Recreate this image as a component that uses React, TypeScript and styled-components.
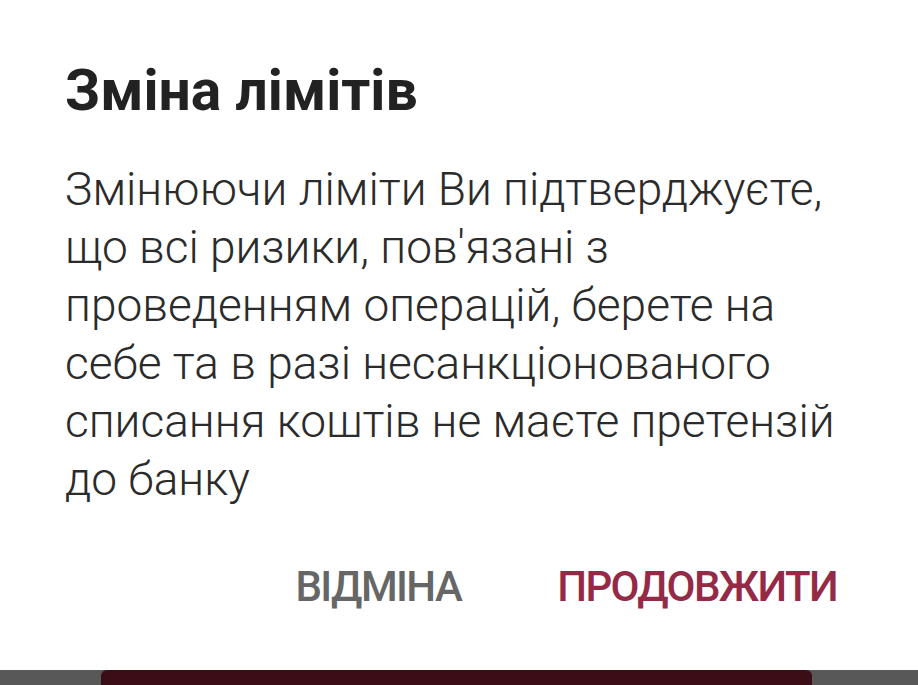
import styled, { createGlobalStyle } from 'styled-components'

const GlobalStyle = createGlobalStyle`
    html, body {
        margin: 0;
        padding: 0;
        background: #585858;
    }
    #root {
        width: 918px;
        height: 685px;
        overflow: hidden;
    }
`

const Page = styled.div`
    display: flex;
    flex-direction: column;
    width: 918px;
    height: 685px;
    background: #585858;
`

const Dialog = styled.div`
    background: #ffffff;
    height: 670px;
    box-sizing: border-box;
    padding: 60px 81px 0 65px;
    display: flex;
    flex-direction: column;
`

const Title = styled.h1`
    margin: 0;
    font-family: Roboto, 'Noto Sans', sans-serif;
    font-weight: 700;
    font-size: 57px;
    line-height: 62px;
    color: #222222;
`

const Message = styled.p`
    margin: 38px 0 0;
    max-width: 790px;
    font-family: Roboto, 'Noto Sans', sans-serif;
    font-weight: 300;
    font-size: 46px;
    line-height: 58px;
    color: #2b2b2b;
`

const Actions = styled.div`
    display: flex;
    justify-content: flex-end;
    align-items: center;
    gap: 96px;
    margin-top: 55px;
`

const ActionButton = styled.button<{ $primary?: boolean }>`
    border: none;
    background: none;
    padding: 0;
    font-family: Roboto, 'Noto Sans', sans-serif;
    font-weight: 500;
    font-size: 42px;
    line-height: 48px;
    letter-spacing: -1.6px;
    color: ${({ $primary }) => ($primary ? '#952a47' : '#666666')};
    cursor: pointer;
`

const Behind = styled.div`
    flex: 1;
    overflow: hidden;
    display: flex;
`

const BehindButton = styled.div`
    margin-left: 101px;
    width: 711px;
    height: 40px;
    flex-shrink: 0;
    border-radius: 6px 6px 0 0;
    background: #3a0d17;
`

const App = () => {
    return (
        <>
            <GlobalStyle />
            <Page>
                <Dialog>
                    <Title>Зміна лімітів</Title>
                    <Message>
                        Змінюючи ліміти Ви підтверджуєте, що всі ризики,
                        пов'язані з проведенням операцій, берете на себе та в
                        разі несанкціонованого списання коштів не маєте
                        претензій до банку
                    </Message>
                    <Actions>
                        <ActionButton>ВІДМІНА</ActionButton>
                        <ActionButton $primary>ПРОДОВЖИТИ</ActionButton>
                    </Actions>
                </Dialog>
                <Behind>
                    <BehindButton />
                </Behind>
            </Page>
        </>
    )
}

export default App
